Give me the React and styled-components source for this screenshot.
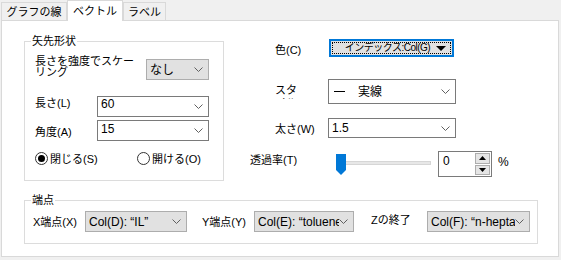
import React from "react";
import styled, { createGlobalStyle } from "styled-components";

const GlobalStyle = createGlobalStyle`
  body {
    margin: 0;
    background: #f0f0f0;
    font-family: "Liberation Sans", "Noto Sans CJK JP", sans-serif;
    font-size: 11px;
    color: #000;
  }
`;

const Window = styled.div`
  width: 561px;
  height: 260px;
  background: #f0f0f0;
`;

const TabBar = styled.div`
  display: flex;
  height: 20px;
  padding-left: 1px;
  position: relative;
  z-index: 1;
`;

const Tab = styled.div`
  box-sizing: border-box;
  display: flex;
  align-items: center;
  justify-content: center;
  width: ${p => p.$w}px;
  height: ${p => (p.$active ? 21 : 19)}px;
  margin-top: ${p => (p.$active ? 0 : 2)}px;
  border: 1px solid #d9d9d9;
  border-bottom: ${p => (p.$active ? "none" : "1px solid #d9d9d9")};
  background: ${p => (p.$active ? "#fff" : "#f0f0f0")};
  line-height: 14px;
  padding-bottom: ${p => (p.$active ? 1 : 0)}px;
`;

const Panel = styled.div`
  box-sizing: border-box;
  width: 558px;
  height: 237px;
  margin-left: 1px;
  border: 1px solid #d9d9d9;
  background: #fff;
  padding: 13px 0 0 22px;
`;

const TopRow = styled.div`
  display: flex;
  align-items: flex-start;
`;

const Group = styled.div`
  box-sizing: border-box;
  width: ${p => p.$w}px;
  height: ${p => p.$h}px;
  margin-top: ${p => p.$mt}px;
  border: 1px solid #dcdcdc;
  padding-left: ${p => p.$pl}px;
`;

const Legend = styled.div`
  width: fit-content;
  height: 14px;
  line-height: 14px;
  margin: -8px 0 0 ${p => 6 - p.$pl}px;
  padding: 0 1px;
  background: #fff;
`;

const Row = styled.div`
  display: flex;
  align-items: ${p => p.$align || "center"};
  margin-top: ${p => p.$mt || 0}px;
  padding-left: ${p => p.$pl || 0}px;
`;

const Label = styled.div`
  flex: none;
  width: ${p => p.$w}px;
  line-height: ${p => p.$lh || 14}px;
  margin-top: ${p => p.$mt || 0}px;
  white-space: nowrap;
`;

const ClipLabel = styled.div`
  flex: none;
  width: ${p => p.$w}px;
  margin-top: ${p => p.$mt || 0}px;
  margin-right: ${p => p.$mr || 0}px;
  height: ${p => p.$h}px;
  line-height: 13px;
  overflow: hidden;
  word-break: break-all;
`;

const Select = styled.div`
  box-sizing: border-box;
  flex: none;
  display: flex;
  align-items: center;
  width: ${p => p.$w}px;
  height: ${p => p.$h}px;
  margin-top: ${p => p.$mt || 0}px;
  margin-right: ${p => p.$mr || 0}px;
  padding: 0 5px 0 3px;
  border: 1px solid ${p => (p.$gray ? "#adadad" : "#7a7a7a")};
  background: ${p => (p.$gray ? "#e1e1e1" : "#fff")};
  font-size: 12px;
  white-space: nowrap;
  overflow: hidden;
`;

const SelectText = styled.span`
  flex: 1;
  overflow: hidden;
  line-height: 14px;
  padding-bottom: ${p => p.$up || 0}px;
  display: flex;
  align-items: center;
`;

const Dash = styled.span`
  display: inline-block;
  width: 11px;
  height: 1px;
  background: #000;
  margin: 0 13px 0 2px;
`;

const Chevron = () => (
  <svg width="9" height="5" viewBox="0 0 9 5" style={{ flex: "none" }}>
    <polyline points="0.5,0.5 4.5,4.5 8.5,0.5" fill="none" stroke="#606060" strokeWidth="1" />
  </svg>
);

const Radios = styled.div`
  display: flex;
  align-items: center;
  margin-top: 10px;
  height: 14px;
`;

const RadioItem = styled.div`
  display: flex;
  align-items: center;
  width: ${p => p.$w}px;
  gap: 2px;
`;

const RadioDot = styled.span`
  box-sizing: border-box;
  width: 13px;
  height: 13px;
  border-radius: 50%;
  border: 1px solid #333;
  display: flex;
  align-items: center;
  justify-content: center;
  &::after {
    content: "";
    width: 7px;
    height: 7px;
    border-radius: 50%;
    background: ${p => (p.$on ? "#000" : "transparent")};
  }
`;

const RightCol = styled.div`
  margin: 5px 0 0 26px;
`;

const ColorButton = styled.div`
  box-sizing: border-box;
  width: 125px;
  height: 18px;
  border: 2px solid #0078d7;
  background: #e1e1e1;
  padding: 1px;
`;

const FocusRect = styled.div`
  box-sizing: border-box;
  height: 100%;
  border: 1px dotted #000;
  display: flex;
  align-items: center;
  padding: 0 4px 0 6px;
  font-size: 10px;
  line-height: 12px;
  white-space: nowrap;
`;

const ColorText = styled.span`
  flex: 1;
  min-width: 0;
  text-align: center;
  letter-spacing: -0.5px;
`;

const Slider = styled.div`
  position: relative;
  width: 96px;
  height: 26px;
  margin-right: 7px;
`;

const Track = styled.div`
  position: absolute;
  left: 2px;
  top: 10px;
  width: 94px;
  height: 4px;
  box-sizing: border-box;
  background: #e7e7e7;
  border: 1px solid #d6d6d6;
`;

const Thumb = styled.svg`
  position: absolute;
  left: 0;
  top: 2px;
`;

const Spin = styled.div`
  box-sizing: border-box;
  display: flex;
  width: 54px;
  height: 26px;
  border: 1px solid #7a7a7a;
  padding: 1px;
  margin-right: 6px;
`;

const SpinText = styled.div`
  flex: 1;
  padding: 1px 0 0 3px;
  font-size: 12px;
  line-height: 14px;
`;

const SpinButtons = styled.div`
  display: flex;
  flex-direction: column;
  gap: 1px;
  width: 15px;
`;

const SpinButton = styled.div`
  box-sizing: border-box;
  flex: 1;
  border: 1px solid #adadad;
  background: #e5e5e5;
  display: flex;
  align-items: center;
  justify-content: center;
`;

const Percent = styled.span`
  font-size: 12px;
  line-height: 14px;
  margin-top: 4px;
`;

const Arrow = ({ up, w = 7, h = 4 }) => (
  <svg width={w} height={h} viewBox={`0 0 ${w} ${h}`} style={{ flex: "none" }}>
    <polygon points={up ? `0,${h} ${w},${h} ${w / 2},0` : `0,0 ${w},0 ${w / 2},${h}`} fill="#000" />
  </svg>
);

const Endpoints = styled.div`
  display: flex;
  align-items: center;
  margin-top: 4px;
`;

export default function App() {
  return (
    <Window>
      <GlobalStyle />
      <TabBar>
        <Tab $w={66}>グラフの線</Tab>
        <Tab $w={56} $active>ベクトル</Tab>
        <Tab $w={43}>ラベル</Tab>
      </TabBar>
      <Panel>
        <TopRow>
          <Group $w={200} $h={140} $mt={7} $pl={10}>
            <Legend $pl={10}>矢先形状</Legend>
            <Row $align="flex-start" $mt={8}>
              <Label $w={111} $lh={11} $mt={0}>
                長さを強度でスケー
                <br />
                リング
              </Label>
              <Select $w={63} $h={21} $mt={3} $gray>
                <SelectText>なし</SelectText>
                <Chevron />
              </Select>
            </Row>
            <Row $align="flex-start" $mt={16}>
              <Label $w={62} $mt={0}>長さ(L)</Label>
              <Select $w={112} $h={21}>
                <SelectText $up={6}>60</SelectText>
                <Chevron />
              </Select>
            </Row>
            <Row $mt={3}>
              <Label $w={62} $mt={2}>角度(A)</Label>
              <Select $w={112} $h={21}>
                <SelectText $up={4}>15</SelectText>
                <Chevron />
              </Select>
            </Row>
            <Radios>
              <RadioItem $w={102}>
                <RadioDot $on />
                閉じる(S)
              </RadioItem>
              <RadioItem>
                <RadioDot />
                開ける(O)
              </RadioItem>
            </Radios>
          </Group>

          <RightCol>
            <Row $pl={25}>
              <Label $w={54} $mt={3}>色(C)</Label>
              <ColorButton>
                <FocusRect>
                  <ColorText>インデックス:Col(G)</ColorText>
                  <Arrow w={10} h={5} />
                </FocusRect>
              </ColorButton>
            </Row>
            <Row $align="flex-start" $pl={25} $mt={22}>
              <ClipLabel $w={26} $h={15} $mt={5} $mr={27}>スタイル</ClipLabel>
              <Select $w={128} $h={25}>
                <SelectText>
                  <Dash />
                  実線
                </SelectText>
                <Chevron />
              </Select>
            </Row>
            <Row $pl={25} $mt={14}>
              <Label $w={53} $mt={1}>太さ(W)</Label>
              <Select $w={128} $h={20}>
                <SelectText $up={1}>1.5</SelectText>
                <Chevron />
              </Select>
            </Row>
            <Row $align="flex-start" $mt={13}>
              <Label $w={85} $mt={2}>透過率(T)</Label>
              <Slider>
                <Track />
                <Thumb width="12" height="22" viewBox="0 0 12 22">
                  <path d="M1 1 H11 V17 L6 22 L1 17 Z" fill="#0078d7" />
                </Thumb>
              </Slider>
              <Spin>
                <SpinText>0</SpinText>
                <SpinButtons>
                  <SpinButton>
                    <Arrow up />
                  </SpinButton>
                  <SpinButton>
                    <Arrow />
                  </SpinButton>
                </SpinButtons>
              </Spin>
              <Percent>%</Percent>
            </Row>
          </RightCol>
        </TopRow>

        <Group $w={514} $h={44} $mt={19} $pl={8}>
          <Legend $pl={8}>端点</Legend>
          <Endpoints>
            <Label $w={52}>X端点(X)</Label>
            <Select $w={102} $h={21} $mr={15} $gray>
              <SelectText>Col(D): “IL”</SelectText>
              <Chevron />
            </Select>
            <Label $w={52}>Y端点(Y)</Label>
            <Select $w={100} $h={21} $mr={17} $gray>
              <SelectText>Col(E): “toluene”</SelectText>
              <Chevron />
            </Select>
            <ClipLabel $w={50} $h={15} $mr={6} $mt={-1}>Zの終了(Z)</ClipLabel>
            <Select $w={103} $h={21} $gray>
              <SelectText>Col(F): “n-heptane”</SelectText>
              <Chevron />
            </Select>
          </Endpoints>
        </Group>
      </Panel>
    </Window>
  );
}
